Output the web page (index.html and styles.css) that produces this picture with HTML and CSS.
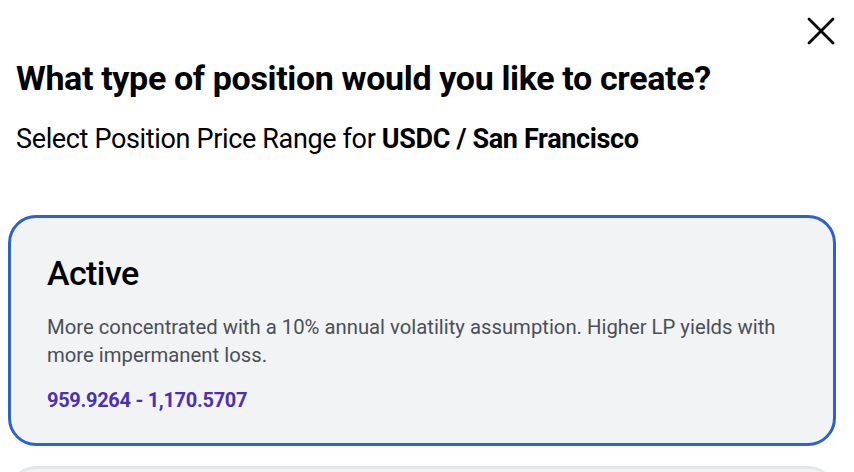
FILE: index.html
```html
<!DOCTYPE html>
<html>
<head>
<meta charset="utf-8">
<link rel="stylesheet" href="styles.css">
</head>
<body>
<div class="modal">
  <div class="top">
    <button class="close" aria-label="Close">
      <svg width="30" height="30" viewBox="0 0 30 30"><path d="M3 3 L27 27 M27 3 L3 27" stroke="#000" stroke-width="2.8" stroke-linecap="round"/></svg>
    </button>
  </div>
  <h1 class="title">What type of position would you like to create?</h1>
  <p class="subtitle">Select Position Price Range for <b>USDC / San Francisco</b></p>
  <div class="options">
    <div class="card selected">
      <h2 class="card-title">Active</h2>
      <p class="card-desc">More concentrated with a 10% annual volatility assumption. Higher LP yields with more impermanent loss.</p>
      <p class="card-range">959.9264 - 1,170.5707</p>
    </div>
    <div class="card placeholder"></div>
  </div>
</div>
</body>
</html>
```
FILE: styles.css
```css
html, body { margin: 0; padding: 0; background: #fff; }
body { font-family: Roboto, "Open Sans", sans-serif; color: #000; overflow: hidden; height: 472px; }
.modal { padding: 0 18px 0 8px; }
.top { display: flex; justify-content: flex-end; height: 52px; padding-top: 16px; box-sizing: border-box; }
.close { border: 0; background: none; padding: 0; width: 30px; height: 30px; cursor: pointer; }
.close svg { display: block; }
.title { margin: 4px 0 0 8px; font-size: 34px; font-weight: 700; letter-spacing: -0.35px; line-height: 44px; }
.subtitle { margin: 22px 0 0 8px; font-size: 27px; letter-spacing: -0.35px; line-height: 34px; }
.subtitle b { font-weight: 700; }
.options { margin-top: 59px; display: flex; flex-direction: column; gap: 20px; }
.card { background: #f2f3f5; border: 3px solid #e4e6ea; border-radius: 28px; padding: 36px 36px 31px 36px; }
.card.selected { border-color: #2d63c8; }
.card.placeholder { height: 120px; padding: 0; }
.card-title { margin: 0; font-size: 34px; font-weight: 500; letter-spacing: -0.6px; line-height: 38px; }
.card-desc { margin: 21px 0 0 0; font-size: 20.3px; color: #4a4f58; line-height: 28px; max-width: 740px; }
.card-range { margin: 19px 0 0 0; font-size: 20px; font-weight: 700; color: #4b30b3; letter-spacing: -0.3px; line-height: 24px; }
```
